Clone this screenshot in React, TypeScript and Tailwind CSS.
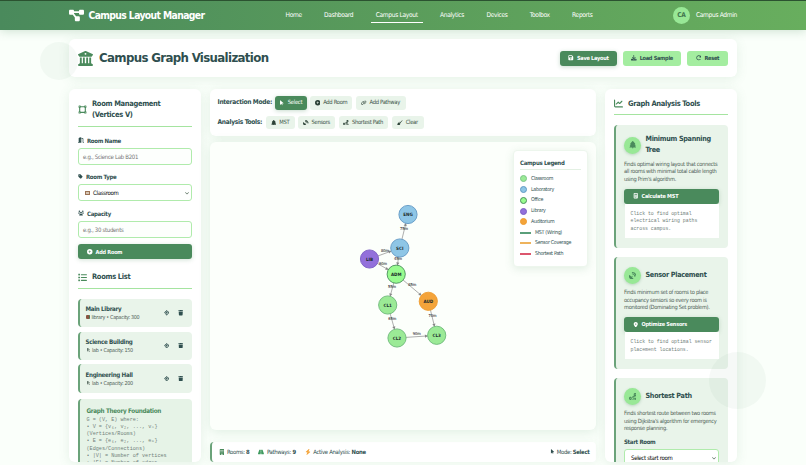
import type { ReactNode } from 'react';
import {
  FaArrowPointer,
  FaArrowRotateRight,
  FaBolt,
  FaBroom,
  FaBuilding,
  FaBuildingColumns,
  FaCalculator,
  FaChartLine,
  FaChevronDown,
  FaCirclePlus,
  FaDiagramProject,
  FaDoorOpen,
  FaDownload,
  FaFloppyDisk,
  FaLink,
  FaList,
  FaLocationCrosshairs,
  FaLocationDot,
  FaMicroscope,
  FaRoad,
  FaRoute,
  FaSatelliteDish,
  FaTag,
  FaTrash,
  FaTree,
  FaUsers,
  FaVectorSquare,
} from 'react-icons/fa6';

type GraphNode = {
  id: string;
  x: number;
  y: number;
  fill: string;
  stroke: string;
};

type GraphEdge = {
  from: string;
  to: string;
  label: string;
  lx: number;
  ly: number;
};

const navItems = ['Home', 'Dashboard', 'Campus Layout', 'Analytics', 'Devices', 'Toolbox', 'Reports'];

const rooms = [
  { name: 'Main Library', type: 'library', capacity: 300 },
  { name: 'Science Building', type: 'lab', capacity: 150 },
  { name: 'Engineering Hall', type: 'lab', capacity: 200 },
];

const nodes: GraphNode[] = [
  { id: 'ENG', x: 408, y: 214.5, fill: '#8ec6e6', stroke: '#6299c4' },
  { id: 'SCI', x: 399.8, y: 248, fill: '#8ec6e6', stroke: '#6299c4' },
  { id: 'LIB', x: 369.5, y: 259, fill: '#9370db', stroke: '#7d5fc4' },
  { id: 'ADM', x: 396.2, y: 274.2, fill: '#98fb8f', stroke: '#4a8f5c' },
  { id: 'AUD', x: 428.3, y: 301.3, fill: '#f4a43a', stroke: '#ee9c30' },
  { id: 'CL1', x: 387.7, y: 305, fill: '#9bea96', stroke: '#6cb878' },
  { id: 'CL2', x: 397, y: 338, fill: '#9bea96', stroke: '#6cb878' },
  { id: 'CL3', x: 436.7, y: 335.3, fill: '#9bea96', stroke: '#6cb878' },
];

const edges: GraphEdge[] = [
  { from: 'SCI', to: 'ENG', label: '75m', lx: 404, ly: 229.5 },
  { from: 'LIB', to: 'SCI', label: '80m', lx: 385, ly: 252.2 },
  { from: 'LIB', to: 'ADM', label: '60m', lx: 383, ly: 265.2 },
  { from: 'SCI', to: 'ADM', label: '45m', lx: 398, ly: 259.5 },
  { from: 'ADM', to: 'CL1', label: '55m', lx: 392, ly: 288.2 },
  { from: 'ADM', to: 'AUD', label: '85m', lx: 412.3, ly: 286.2 },
  { from: 'CL1', to: 'CL2', label: '65m', lx: 392.3, ly: 320.2 },
  { from: 'AUD', to: 'CL3', label: '70m', lx: 432.5, ly: 317.2 },
  { from: 'CL2', to: 'CL3', label: '90m', lx: 416.7, ly: 335.3 },
];

const legendDots = [
  { label: 'Classroom', color: 'bg-[#9bea96] border-[#7cc587]' },
  { label: 'Laboratory', color: 'bg-[#8ec6e6] border-[#6299c4]' },
  { label: 'Office', color: 'bg-[#98fb8f] border-[#4a8f5c]' },
  { label: 'Library', color: 'bg-[#9370db] border-[#7d5fc4]' },
  { label: 'Auditorium', color: 'bg-[#f4a43a] border-[#ee9c30]' },
];

const legendLines = [
  { label: 'MST (Wiring)', color: 'bg-[#5a9f7a]' },
  { label: 'Sensor Coverage', color: 'bg-[#eeb35c]' },
  { label: 'Shortest Path', color: 'bg-[#dc566d]' },
];

const Header = () => (
  <header className="h-[30px] shrink-0 border-t border-[#2b5230] bg-gradient-to-r from-[#4a8a5c] via-[#5a9c5b] to-[#68ae5e] px-[69px] text-white shadow-[0_2px_10px_rgba(74,138,92,0.22)]">
    <div className="flex h-full items-center">
      <FaDiagramProject className="h-[15px] w-[15px] shrink-0" />
      <h1 className="ml-[4.5px] w-[182px] shrink-0 text-[10.3px] tracking-[-0.06em] font-bold">
        Campus Layout Manager
      </h1>
      <nav className="ml-[10px] flex h-full items-center text-[6.6px] tracking-[-0.05em]">
        {navItems.map((item) => (
          <a
            key={item}
            className={`mr-[12.4px] flex h-[15px] items-center border-b px-[5px] pt-px whitespace-nowrap ${
              item === 'Campus Layout' ? 'border-white' : 'border-transparent'
            }`}
          >
            {item}
          </a>
        ))}
      </nav>
      <div className="ml-auto flex items-center gap-[6px] text-[6.6px] tracking-[-0.05em]">
        <span className="flex h-[17px] w-[17px] items-center justify-center rounded-full bg-[#98e896] font-bold text-[#42764e]">
          CA
        </span>
        Campus Admin
      </div>
    </div>
  </header>
);

const SectionTitle = ({ icon, children }: { icon: ReactNode; children: ReactNode }) => (
  <h2 className="flex items-center gap-[5px] border-b border-[#a5e4a0] pb-[5px] text-[7.5px] leading-[11.4px] tracking-[-0.045em] font-bold">
    <span className="text-[9px] text-[#4a8a5c]">{icon}</span>
    <span>{children}</span>
  </h2>
);

const FieldLabel = ({ icon, children }: { icon: ReactNode; children: ReactNode }) => (
  <label className="flex h-[9px] items-center gap-[3px] text-[6px] tracking-[-0.05em] font-bold">
    {icon}
    {children}
  </label>
);

const Select = ({ children }: { children: ReactNode }) => (
  <div className="flex h-[17px] items-center justify-between rounded-[3px] border border-[#b0ebac] bg-white pr-[2px] pl-[6px] text-[6px] text-black">
    <span className="flex items-center gap-[2px]">{children}</span>
    <FaChevronDown className="text-[4px] text-[#35503c]" />
  </div>
);

const PrimaryButton = ({ icon, children }: { icon: ReactNode; children: ReactNode }) => (
  <button className="flex h-[15px] w-full items-center gap-[3px] rounded-[3px] bg-[#4a8a5c] px-[9px] text-[5.5px] tracking-[-0.2px] font-bold text-white shadow-[0_1px_4px_rgba(74,138,92,0.25)]">
    {icon}
    {children}
  </button>
);

const RoomPanel = () => (
  <aside className="h-[373px] w-[132px] overflow-hidden rounded-[6px] bg-white px-[9px] pt-[9px] shadow-[0_2px_12px_rgba(74,138,92,0.12)]">
    <SectionTitle icon={<FaVectorSquare />}>
      Room Management
      <br />
      (Vertices V)
    </SectionTitle>
    <div className="mt-[9px] flex flex-col gap-[10.5px]">
      <div className="flex flex-col gap-[3px]">
        <FieldLabel icon={<FaDoorOpen />}>Room Name</FieldLabel>
        <div className="flex h-[17px] items-center rounded-[3px] border border-[#b0ebac] bg-[#fdfffd] px-[4px] text-[6px] text-[#757575]">
          e.g., Science Lab B201
        </div>
      </div>
      <div className="-mt-[3px] flex flex-col gap-[3px]">
        <FieldLabel icon={<FaTag className="text-[5px]" />}>Room Type</FieldLabel>
        <Select>
          <span className="mr-px h-[4px] w-[5px] border border-[#9b7355] bg-[#d6c5b4]" />
          Classroom
        </Select>
      </div>
      <div className="-mt-[3px] flex flex-col gap-[3px]">
        <FieldLabel icon={<FaUsers />}>Capacity</FieldLabel>
        <div className="flex h-[17px] items-center rounded-[3px] border border-[#b0ebac] bg-[#fdfffd] px-[4px] text-[6px] text-[#757575]">
          e.g., 30 students
        </div>
      </div>
    </div>
    <div className="mt-[6.5px] mb-[12px]">
      <PrimaryButton icon={<FaCirclePlus />}>Add Room</PrimaryButton>
    </div>
    <SectionTitle icon={<FaList />}>Rooms List</SectionTitle>
    <div className="mt-[10px] flex flex-col gap-[4.5px]">
      {rooms.map((room) => (
        <div
          key={room.name}
          className="flex h-[28.3px] items-center rounded-[4px] border-l-2 border-[#6ba37a] bg-[#e9f4ea] pr-[9px] pl-[5.5px]"
        >
          <div className="flex-1">
            <div className="text-[6.2px] leading-[9px] font-bold whitespace-nowrap">{room.name}</div>
            <div className="flex items-center gap-[2px] text-[5.4px] leading-[8px] whitespace-nowrap text-[#4f6157]">
              {room.type === 'lab' ? (
                <FaMicroscope className="text-[4.5px]" />
              ) : (
                <span className="h-[4px] w-[4px] rounded-[1px] border-r border-[#497a55] bg-[#8b5542]" />
              )}
              {room.type} • Capacity: {room.capacity}
            </div>
          </div>
          <FaLocationCrosshairs className="mr-[8.5px] text-[5.5px]" />
          <FaTrash className="text-[5.5px]" />
        </div>
      ))}
    </div>
    <div className="mt-[6px] h-[90px] rounded-[4px] border-l-2 border-[#6ba37a] bg-[#e6f3e7] px-[6.5px] pt-[7px]">
      <h3 className="text-[6.3px] leading-[9px] font-bold whitespace-nowrap text-[#4a8a5c]">Graph Theory Foundation</h3>
      <div className="pt-[2px] font-['Liberation_Mono',monospace] text-[5.15px] leading-[7.25px] tracking-normal whitespace-nowrap text-[#71817a]">
        G = (V, E) where:
        <br />• V = {'{v₁, v₂, ..., vₙ}'}
        <br />
        (Vertices/Rooms)
        <br />• E = {'{e₁, e₂, ..., eₘ}'}
        <br />
        (Edges/Connections)
        <br />• |V| = Number of vertices
        <br />• |E| = Number of edges
      </div>
    </div>
  </aside>
);

type ToolButtonProps = {
  icon: ReactNode;
  width: string;
  active?: boolean;
  children: ReactNode;
};

const ToolButton = ({ icon, width, active, children }: ToolButtonProps) => (
  <button
    className={`flex h-[13.5px] items-center justify-center gap-[3px] rounded-[3px] text-[5.8px] whitespace-nowrap ${width} ${
      active ? 'bg-[#4a8a5c] text-white shadow-[0_1px_4px_rgba(74,138,92,0.3)]' : 'bg-[#e9f4ea] text-[#3c5347]'
    }`}
  >
    <span className={`text-[5.5px] ${active ? 'text-white' : 'text-[#2c4237]'}`}>{icon}</span>
    {children}
  </button>
);

const CampusGraph = () => (
  <svg viewBox="210 142 386 288" className="block h-[288px] w-[386px] tracking-normal">
    {edges.map((edge) => {
      const a = nodes.find((n) => n.id === edge.from)!;
      const b = nodes.find((n) => n.id === edge.to)!;
      const length = Math.hypot(b.x - a.x, b.y - a.y);
      const ux = (b.x - a.x) / length;
      const uy = (b.y - a.y) / length;
      // arrow tip stops at the rim of the target node
      const tx = b.x - ux * 8.8;
      const ty = b.y - uy * 8.8;
      const bx = tx - ux * 3;
      const by = ty - uy * 3;
      return (
        <g key={edge.from + edge.to}>
          <line x1={a.x} y1={a.y} x2={tx} y2={ty} stroke="#999" strokeWidth={0.8} />
          <polygon
            points={`${tx},${ty} ${bx - uy * 1.6},${by + ux * 1.6} ${bx + uy * 1.6},${by - ux * 1.6}`}
            fill="#888"
          />
        </g>
      );
    })}
    {nodes.map((n) => (
      <g key={n.id}>
        <circle cx={n.x} cy={n.y} r={9.1} fill={n.fill} stroke={n.stroke} strokeWidth={0.9} />
        <text x={n.x} y={n.y + 1.6} textAnchor="middle" fontSize={4.5} fontWeight={700} fill="#1a2a2a">
          {n.id}
        </text>
      </g>
    ))}
    {edges.map((edge) => (
      <text
        key={edge.label}
        x={edge.lx}
        y={edge.ly}
        textAnchor="middle"
        fontSize={4}
        fill="#444"
        stroke="#555"
        strokeWidth={0.12}
      >
        {edge.label}
      </text>
    ))}
  </svg>
);

const Legend = () => (
  <div className="absolute top-[8px] right-[8px] h-[117px] w-[75px] rounded-[4px] border border-[#edf6ed] bg-white px-[6px] pt-[6.5px] shadow-[0_2px_8px_rgba(74,138,92,0.15)]">
    <h3 className="mb-[4px] border-b border-[#e3f0e3] pb-[2px] text-[6px] leading-[9px] font-bold whitespace-nowrap">
      Campus Legend
    </h3>
    {legendDots.map((item) => (
      <div key={item.label} className="flex h-[10.75px] items-center gap-[4px] text-[5.3px]">
        <span className={`h-[7px] w-[7px] rounded-full border ${item.color}`} />
        {item.label}
      </div>
    ))}
    {legendLines.map((item) => (
      <div key={item.label} className="flex h-[10.75px] items-center gap-[4px] text-[5.3px] whitespace-nowrap">
        <span className={`h-[2px] w-[11px] shrink-0 ${item.color}`} />
        {item.label}
      </div>
    ))}
  </div>
);

const Workspace = () => (
  <section className="flex h-[373px] w-[386px] flex-col">
    <div className="flex h-[47px] shrink-0 flex-col gap-[6px] rounded-[6px] bg-white px-[7.5px] pt-[7px] shadow-[0_2px_12px_rgba(74,138,92,0.12)]">
      <div className="flex items-center gap-[3.5px]">
        <span className="w-[54px] pt-px text-[6.6px] font-bold whitespace-nowrap">Interaction Mode:</span>
        <ToolButton icon={<FaArrowPointer />} width="w-[31.5px]" active>
          Select
        </ToolButton>
        <ToolButton icon={<FaCirclePlus />} width="w-[42px]">
          Add Room
        </ToolButton>
        <ToolButton icon={<FaLink />} width="w-[50px]">
          Add Pathway
        </ToolButton>
      </div>
      <div className="flex items-center gap-[3.5px]">
        <span className="w-[44.5px] pt-px text-[6.6px] font-bold whitespace-nowrap">Analysis Tools:</span>
        <ToolButton icon={<FaTree />} width="w-[29px]">
          MST
        </ToolButton>
        <ToolButton icon={<FaSatelliteDish />} width="w-[37px]">
          Sensors
        </ToolButton>
        <ToolButton icon={<FaRoute />} width="w-[49.5px]">
          Shortest Path
        </ToolButton>
        <ToolButton icon={<FaBroom />} width="w-[32px]">
          Clear
        </ToolButton>
      </div>
    </div>
    <div className="relative mt-[6px] h-[288px] shrink-0 rounded-[6px] bg-[#fcfffb] shadow-[0_2px_12px_rgba(74,138,92,0.15)]">
      <CampusGraph />
      <Legend />
    </div>
    <div className="mt-[12px] flex h-[20px] shrink-0 items-center gap-[9px] rounded-[4px] border-l-2 border-[#6ba37a] bg-white px-[6.5px] text-[5.9px] shadow-[0_2px_8px_rgba(74,138,92,0.08)]">
      <span className="flex items-center gap-[2.5px]">
        <FaBuilding className="text-[#4a8a5c]" />
        <span>Rooms: <b>8</b></span>
      </span>
      <span className="flex items-center gap-[2.5px]">
        <FaRoad className="text-[#3f9a5f]" />
        <span>Pathways: <b>9</b></span>
      </span>
      <span className="flex items-center gap-[2.5px]">
        <FaBolt className="text-[#f4a43a]" />
        <span>Active Analysis: <b>None</b></span>
      </span>
      <span className="ml-auto flex items-center gap-[2px]">
        <FaArrowPointer className="text-[5px]" />
        <span>Mode: <b>Select</b></span>
      </span>
    </div>
  </section>
);

type ToolCardProps = {
  icon: ReactNode;
  title: ReactNode;
  lines: string[];
  height: string;
  children: ReactNode;
};

const ToolCard = ({ icon, title, lines, height, children }: ToolCardProps) => (
  <div className={`${height} shrink-0 rounded-[4px] border-l-2 border-[#6ba37a] bg-[#e9f4ea] pt-[9.5px] pr-[9px] pl-[8px]`}>
    <div className="flex items-center gap-[4.5px] text-[7.2px] leading-[10.6px] font-bold">
      <span className="flex h-[17px] w-[17px] shrink-0 items-center justify-center rounded-full bg-[#98e896] text-[7.5px] text-[#4a8a5c] shadow-[0_1px_3px_rgba(74,138,92,0.3)]">
        {icon}
      </span>
      <span className="whitespace-nowrap">{title}</span>
    </div>
    <div className="mt-[5.5px] mb-[6px] text-[5.7px] leading-[7.2px] whitespace-nowrap text-[#4f6157]">
      {lines.map((line) => (
        <div key={line}>{line}</div>
      ))}
    </div>
    {children}
  </div>
);

const ResultBox = ({ lines }: { lines: string[] }) => (
  <div className="mx-[0.5px] bg-white px-[6px] pt-[6px] pb-[5.5px] font-['Liberation_Mono',monospace] text-[4.85px] leading-[7.7px] tracking-normal whitespace-nowrap text-[#71817a]">
    {lines.map((line) => (
      <div key={line}>{line}</div>
    ))}
  </div>
);

const AnalysisPanel = () => (
  <aside className="flex h-[373px] w-[132px] flex-col overflow-hidden rounded-[6px] bg-white px-[9px] pt-[9px] shadow-[0_2px_12px_rgba(74,138,92,0.12)]">
    <SectionTitle icon={<FaChartLine />}>Graph Analysis Tools</SectionTitle>
    <div className="mt-[9.5px] flex flex-col gap-[9.5px]">
      <ToolCard
        height="h-[123px]"
        icon={<FaTree />}
        title={<>Minimum Spanning<br />Tree</>}
        lines={['Finds optimal wiring layout that connects', 'all rooms with minimal total cable length', "using Prim's algorithm."]}
      >
        <PrimaryButton icon={<FaCalculator />}>Calculate MST</PrimaryButton>
        <ResultBox lines={['Click to find optimal', 'electrical wiring paths', 'across campus.']} />
      </ToolCard>
      <ToolCard
        height="h-[111.5px]"
        icon={<FaSatelliteDish />}
        title="Sensor Placement"
        lines={['Finds minimum set of rooms to place', 'occupancy sensors so every room is', 'monitored (Dominating Set problem).']}
      >
        <PrimaryButton icon={<FaLocationDot />}>Optimize Sensors</PrimaryButton>
        <ResultBox lines={['Click to find optimal sensor', 'placement locations.']} />
      </ToolCard>
      <ToolCard
        height="h-[112px]"
        icon={<FaRoute />}
        title="Shortest Path"
        lines={['Finds shortest route between two rooms', "using Dijkstra's algorithm for emergency", 'response planning.']}
      >
        <div className="-mt-px mb-[3px] text-[6px] leading-[9px] font-bold">Start Room</div>
        <Select>Select start room</Select>
      </ToolCard>
    </div>
  </aside>
);

const App = () => {
  return (
    <div className="relative flex h-[465px] w-[806px] flex-col overflow-hidden bg-[#fafffa] font-['DejaVu_Sans_Condensed','DejaVu_Sans',sans-serif] text-[#2f4f4f]">
      <Header />
      <main className="px-[69px] pt-[9px]">
        {/* Page title */}
        <div className="flex h-[38px] items-center rounded-[6px] bg-white px-[9px] shadow-[0_2px_12px_rgba(74,138,92,0.12)]">
          <FaBuildingColumns className="text-[15px] text-[#4a8a5c]" />
          <h2 className="ml-[6px] text-[13.1px] tracking-[-0.05em] font-bold whitespace-nowrap">
            Campus Graph Visualization
          </h2>
          <div className="ml-auto flex gap-[6px] text-[5.6px] tracking-[-0.05em] font-bold">
            <button className="flex h-[15px] w-[57px] items-center justify-center gap-[3px] rounded-[3px] bg-[#4a8a5c] text-white shadow-[0_1px_4px_rgba(74,138,92,0.3)]">
              <FaFloppyDisk />
              Save Layout
            </button>
            <button className="flex h-[15px] w-[58px] items-center justify-center gap-[3px] rounded-[3px] bg-[#a4eda0]">
              <FaDownload />
              Load Sample
            </button>
            <button className="flex h-[15px] w-[41px] items-center justify-center gap-[3px] rounded-[3px] bg-[#a4eda0]">
              <FaArrowRotateRight />
              Reset
            </button>
          </div>
        </div>
        <div className="mt-[12px] flex gap-[9px] tracking-[-0.3px]">
          <RoomPanel />
          <Workspace />
          <AnalysisPanel />
        </div>
      </main>
      {/* Floating background circles */}
      <div className="pointer-events-none absolute top-[42px] left-[40px] h-[38px] w-[38px] rounded-full bg-[#4a8a5c]/5" />
      <div className="pointer-events-none absolute top-[352px] left-[709px] h-[57px] w-[57px] rounded-full bg-[#4a8a5c]/5" />
    </div>
  );
};

export default App;
